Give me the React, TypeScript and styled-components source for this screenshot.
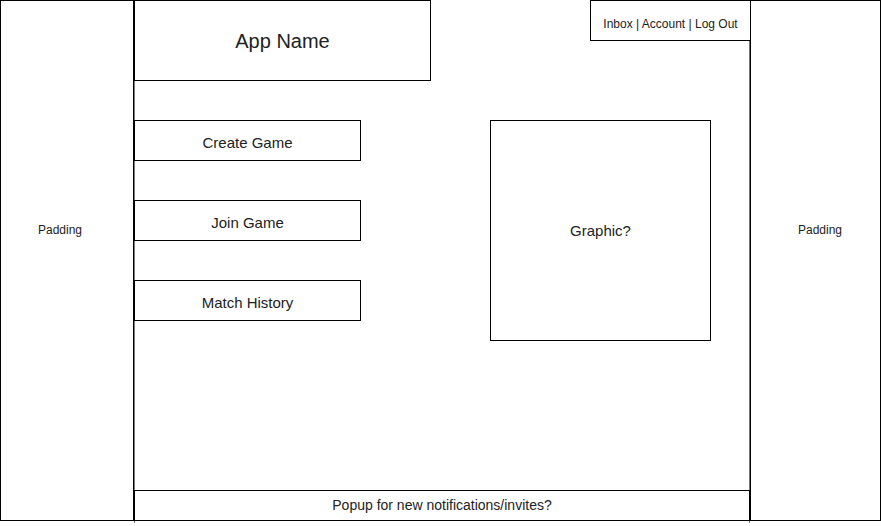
import { FC } from 'react';
import styled, { createGlobalStyle } from 'styled-components';

const GlobalStyle = createGlobalStyle`
  * {
    box-sizing: border-box;
  }
  body {
    margin: 0;
    background: #ffffff;
    font-family: 'Liberation Sans', Arial, sans-serif;
    color: #222;
  }
`;

const menuItems = ['Create Game', 'Join Game', 'Match History'];

const App: FC = () => {
  return (
    <>
      <GlobalStyle />
      <Page>
        <SidePanel $textLeft={38}>Padding</SidePanel>
        <Main>
          <Header>
            <AppName>App Name</AppName>
            <UserLinks>Inbox | Account | Log Out</UserLinks>
          </Header>
          <Body>
            <Menu>
              {menuItems.map((item) => (
                <MenuButton key={item}>{item}</MenuButton>
              ))}
            </Menu>
            <Graphic>Graphic?</Graphic>
          </Body>
          <Popup>Popup for new notifications/invites?</Popup>
        </Main>
        <SidePanel $textLeft={48}>Padding</SidePanel>
      </Page>
    </>
  );
};

export default App;

const Page = styled.div`
  display: grid;
  grid-template-columns: 134px 616px 131px;
  align-items: start;
  width: 881px;
`;

const SidePanel = styled.div<{ $textLeft: number }>`
  height: 521px;
  border: 1px solid #000;
  padding: 222px 0 0 ${(p) => p.$textLeft - 1}px;
  font-size: 12px;
  line-height: 14px;
`;

const Main = styled.div`
  display: flex;
  flex-direction: column;
  height: 523px;
  /* thin grey guide lines down both sides */
  box-shadow: inset 1px 0 #777, inset -1px 0 #777;
`;

const Header = styled.div`
  display: flex;
  justify-content: space-between;
  align-items: flex-start;
`;

const Box = styled.div`
  display: flex;
  justify-content: center;
  align-items: center;
  border: 1px solid #000;
  background: #fff;
`;

const AppName = styled(Box)`
  width: 297px;
  height: 81px;
  font-size: 20px;
  padding-top: 2px;
`;

const UserLinks = styled(Box)`
  width: 161px;
  height: 41px;
  font-size: 12px;
  padding-top: 7px;
  margin-right: -1px;
`;

const Body = styled.div`
  display: flex;
  align-items: flex-start;
  gap: 129px;
  margin-top: 39px;
`;

const Menu = styled.div`
  display: flex;
  flex-direction: column;
  gap: 39px;
`;

const MenuButton = styled(Box)`
  width: 227px;
  height: 41px;
  font-size: 15px;
  padding-top: 3px;
`;

const Graphic = styled(Box)`
  width: 221px;
  height: 221px;
  font-size: 15px;
`;

const Popup = styled(Box)`
  margin-top: auto;
  margin-bottom: 2px;
  height: 31px;
  font-size: 14px;
  padding-bottom: 1px;
`;
